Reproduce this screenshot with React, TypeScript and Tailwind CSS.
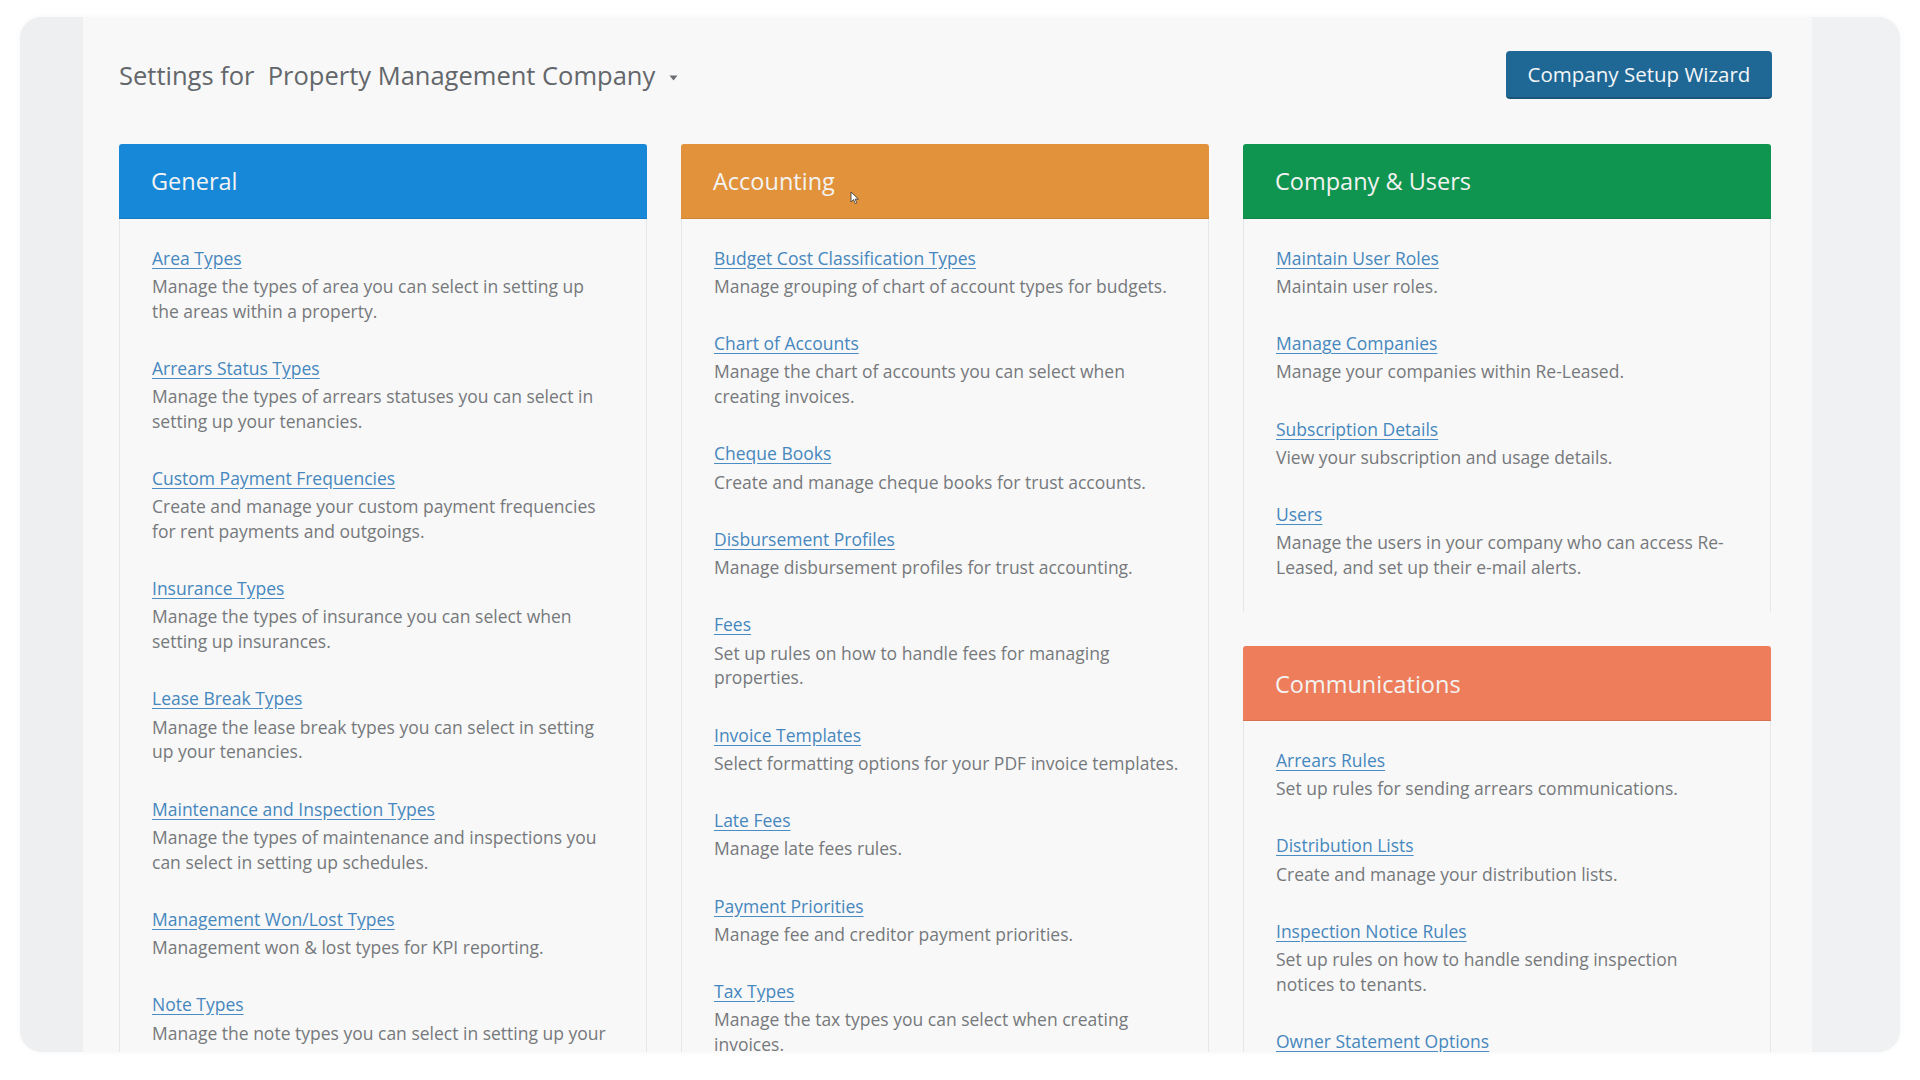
import React from "react";

type Item = { title: string; lines: string[] };

const general: Item[] = [
  { title: "Area Types", lines: ["Manage the types of area you can select in setting up", "the areas within a property."] },
  { title: "Arrears Status Types", lines: ["Manage the types of arrears statuses you can select in", "setting up your tenancies."] },
  { title: "Custom Payment Frequencies", lines: ["Create and manage your custom payment frequencies", "for rent payments and outgoings."] },
  { title: "Insurance Types", lines: ["Manage the types of insurance you can select when", "setting up insurances."] },
  { title: "Lease Break Types", lines: ["Manage the lease break types you can select in setting", "up your tenancies."] },
  { title: "Maintenance and Inspection Types", lines: ["Manage the types of maintenance and inspections you", "can select in setting up schedules."] },
  { title: "Management Won/Lost Types", lines: ["Management won & lost types for KPI reporting."] },
  { title: "Note Types", lines: ["Manage the note types you can select in setting up your"] },
];

const accounting: Item[] = [
  { title: "Budget Cost Classification Types", lines: ["Manage grouping of chart of account types for budgets."] },
  { title: "Chart of Accounts", lines: ["Manage the chart of accounts you can select when", "creating invoices."] },
  { title: "Cheque Books", lines: ["Create and manage cheque books for trust accounts."] },
  { title: "Disbursement Profiles", lines: ["Manage disbursement profiles for trust accounting."] },
  { title: "Fees", lines: ["Set up rules on how to handle fees for managing", "properties."] },
  { title: "Invoice Templates", lines: ["Select formatting options for your PDF invoice templates."] },
  { title: "Late Fees", lines: ["Manage late fees rules."] },
  { title: "Payment Priorities", lines: ["Manage fee and creditor payment priorities."] },
  { title: "Tax Types", lines: ["Manage the tax types you can select when creating", "invoices."] },
];

const company: Item[] = [
  { title: "Maintain User Roles", lines: ["Maintain user roles."] },
  { title: "Manage Companies", lines: ["Manage your companies within Re-Leased."] },
  { title: "Subscription Details", lines: ["View your subscription and usage details."] },
  { title: "Users", lines: ["Manage the users in your company who can access Re-", "Leased, and set up their e-mail alerts."] },
];

const communications: Item[] = [
  { title: "Arrears Rules", lines: ["Set up rules for sending arrears communications."] },
  { title: "Distribution Lists", lines: ["Create and manage your distribution lists."] },
  { title: "Inspection Notice Rules", lines: ["Set up rules on how to handle sending inspection", "notices to tenants."] },
  { title: "Owner Statement Options", lines: [] },
];

function Items({ items }: { items: Item[] }) {
  return (
    <div className="pt-[26.6px] pl-[32px] pr-[16px]">
      {items.map((it) => (
        <div key={it.title} className="mb-[32.6px]">
          <div className="leading-[24.7px] mb-[3.5px]">
            <a
              href="#"
              className="text-[#4687be] underline decoration-[#4a8cc4] underline-offset-[3px] whitespace-nowrap"
            >
              {it.title}
            </a>
          </div>
          {it.lines.map((l, i) => (
            <div key={i} className="leading-[24.7px] text-[#76797c] whitespace-nowrap">
              {l}
            </div>
          ))}
        </div>
      ))}
    </div>
  );
}

function Header({ title, color }: { title: string; color: string }) {
  return (
    <div className={`shrink-0 h-[75px] rounded-t-[3px] flex items-center pl-[32px] pt-[2px] border-b border-black/10 ${color}`}>
      <span className="text-[23.5px] text-[#f3f3f3]">{title}</span>
    </div>
  );
}

export default function App() {
  return (
    <div
      className="w-[1920px] h-[1080px] bg-white overflow-hidden"
      style={{ fontFamily: '"Open Sans", "Noto Sans", sans-serif' }}
    >
      <div className="ml-[20px] mt-[17px] w-[1880px] h-[1035px] rounded-[22px] overflow-hidden flex bg-[#eef0f1] shadow-[0_0_6px_rgba(0,0,0,0.04)]">
        <div className="w-[63px] shrink-0 bg-[#edeff0]" />
        <div className="w-[1729px] shrink-0 bg-[#f8f8f8] pl-[36px] pr-[40px] pt-[34px]">
          <div className="flex items-center justify-between h-[48px]">
            <div className="flex items-center text-[25.5px] text-[#63676b]">
              <span>Settings for&nbsp; Property Management Company</span>
              <svg className="ml-[14px] mt-[5px]" width="9" height="6" viewBox="0 0 9 6">
                <path d="M0.5 0.5 L8.5 0.5 L4.5 5.5 Z" fill="#6a6e72" />
              </svg>
            </div>
            <button className="w-[266px] h-[48px] rounded-[4px] bg-[#1f6795] text-[#f4f6f8] text-[20.5px] border-b-[2px] border-[#1a5479]">
              Company Setup Wizard
            </button>
          </div>

          <div className="mt-[45px] grid grid-cols-[528px_528px_528px] gap-x-[34px] text-[17.5px]">
            <div className="flex flex-col h-[900px]">
              <Header title="General" color="bg-[#1788d8]" />
              <div className="flex-1 border-x border-[#e5e8ea]">
                <Items items={general} />
              </div>
            </div>
            <div className="relative flex flex-col h-[900px]">
              <Header title="Accounting" color="bg-[#e2923a]" />
              <div className="flex-1 border-x border-[#e5e8ea]">
                <Items items={accounting} />
              </div>
              <svg className="absolute left-[169px] top-[47px]" width="10" height="14" viewBox="0 0 10 14">
                <path d="M1 1 L1 11 L3.5 8.6 L5.3 12.6 L6.8 11.9 L5.1 8.1 L8.4 8.1 Z" fill="#ffffff" stroke="#444" strokeWidth="0.9" />
              </svg>
            </div>
            <div className="flex flex-col h-[900px]">
              <Header title="Company & Users" color="bg-[#109550]" />
              <div className="border-x border-[#e5e8ea]">
                <Items items={company} />
              </div>
              <div className="mt-[34px]">
                <Header title="Communications" color="bg-[#ee7d5b]" />
              </div>
              <div className="flex-1 border-x border-[#e5e8ea]">
                <Items items={communications} />
              </div>
            </div>
          </div>
        </div>
        <div className="flex-1 bg-[#eff1f2]" />
      </div>
    </div>
  );
}
